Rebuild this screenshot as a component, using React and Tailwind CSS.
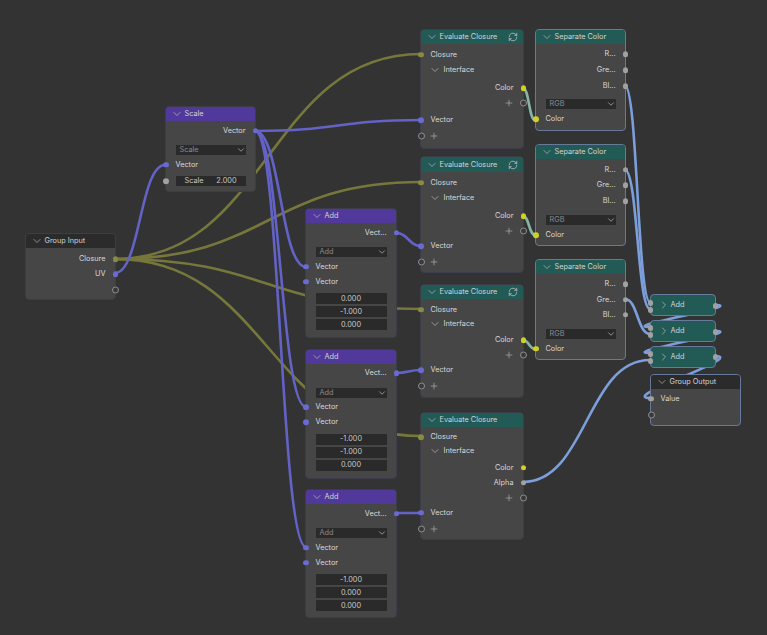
import React from "react";
import { RefreshCw, Plus, ChevronDown, ChevronRight } from "lucide-react";

const CLOSURE = "#77773c";
const VECTOR = "#6363c7";
const VALUE = "#7c9fdc";
const MINT = "#86b5a5";

// [x1, y1, x2, y2, colour], handles are half the horizontal distance like blender
const LINKS = [
  [115, 259, 421, 54, CLOSURE],
  [115, 259, 421, 182, CLOSURE],
  [115, 259, 421, 309, CLOSURE],
  [115, 259, 421, 436, CLOSURE],
  [115, 273, 165, 165, VECTOR],
  [255, 131, 421, 120, VECTOR],
  [255, 131, 306, 267, VECTOR],
  [255, 131, 306, 407, VECTOR],
  [255, 131, 306, 547, VECTOR],
  [396, 233, 421, 246, VECTOR],
  [396, 373, 421, 370, VECTOR],
  [396, 513, 421, 513, VECTOR],
  [523, 88, 535, 120, MINT],
  [523, 216, 535, 235, MINT],
  [523, 340, 535, 349, MINT],
  [625, 86, 650, 302, VALUE],
  [625, 170, 650, 309, VALUE],
  [625, 299, 650, 334, VALUE],
  [715, 305, 650, 327, VALUE],
  [715, 331, 650, 353, VALUE],
  [715, 356, 650, 398, VALUE],
  [523, 482, 650, 360, VALUE],
];

function linkPath([x1, y1, x2, y2]) {
  const h = Math.abs(x2 - x1) * 0.5;
  return `M${x1} ${y1} C${x1 + h} ${y1} ${x2 - h} ${y2} ${x2} ${y2}`;
}

const Socket = ({ side, type }) => {
  const place = side === "left" ? "-left-[3px]" : "-right-[3px]";
  if (type === "virtual") {
    const ringPlace = side === "left" ? "-left-[3.5px]" : "-right-[3.5px]";
    return <span className={`absolute top-1/2 -translate-y-1/2 ${ringPlace} h-[7px] w-[7px] rounded-full border border-[#8f8f8f] bg-[#3a3a3a]`} />;
  }
  const colour = {
    vector: "bg-[#6a6ad0]",
    closure: "bg-[#8a8a45]",
    color: "bg-[#d0d028]",
    value: "bg-[#a1a1a1]",
  }[type];
  return <span className={`absolute top-1/2 -translate-y-1/2 ${place} h-[5.5px] w-[5.5px] rounded-full ${colour}`} />;
};

const Row = ({ children, side, type, right, className = "" }) => (
  <div className={`relative flex h-[15px] shrink-0 items-center px-[9.5px] ${right ? "justify-end" : ""} ${className}`}>
    {children}
    {type && <Socket side={side} type={type} />}
  </div>
);

const Node = ({ x, y, w, h, head, title, selected, sync, children }) => (
  <div
    className={`absolute flex flex-col rounded-[4px] border bg-[#464646] ${selected ? "border-[#66799a]" : "border-[#3c3c4a]"}`}
    style={{ left: x, top: y, width: w, height: h }}
  >
    <div className={`flex shrink-0 items-center rounded-t-[3px] pl-[5px] pr-[5px] ${head}`}>
      <ChevronDown size={12} strokeWidth={1.2} className="text-[#d0d0d0]" />
      <span className="ml-[1.5px] flex-1 text-[#d4d4d4]">{title}</span>
      {sync && <RefreshCw size={10} strokeWidth={1.5} className="text-[#d8d8d8]" />}
    </div>
    {children}
  </div>
);

const Dropdown = ({ label, className = "" }) => (
  <div className={`mx-[9.5px] flex h-[10px] shrink-0 items-center justify-between bg-[#2a2a2a] pl-[4px] text-[#8c8c8c] ${className}`}>
    <span>{label}</span>
    <ChevronDown size={10} strokeWidth={1.5} className="text-[#cfcfcf]" />
  </div>
);

const Field = ({ value }) => (
  <div className="flex h-[11px] items-center justify-center bg-[#2a2a2a] text-[#c8c8c8]">{value}</div>
);

const PlusRow = ({ left, className = "" }) => (
  <Row side={left ? "left" : "right"} type="virtual" right={!left} className={className}>
    <Plus size={10} strokeWidth={1.5} className={`text-[#b8b8b8] ${left ? "-ml-[2px]" : ""}`} />
  </Row>
);

const AddNode = ({ y, h, a, b, c }) => (
  <Node x={305} y={y} w={92} h={h} title="Add" head="h-[14px] bg-[#51399b]">
    <Row side="right" type="vector" right className="mt-[2px]">Vect...</Row>
    <Dropdown label="Add" className="mt-[7px]" />
    <Row side="left" type="vector" className="mt-[2px]">Vector</Row>
    <Row side="left" type="vector">Vector</Row>
    <div className="mx-[9.5px] mt-[4px] flex flex-col gap-[2px]">
      <Field value={a} />
      <Field value={b} />
      <Field value={c} />
    </div>
  </Node>
);

const EvalNode = ({ y, h, head, sync, alpha, closureGap, interfaceGap, colorGap, vecGap }) => (
  <Node x={420} y={y} w={104} h={h} title="Evaluate Closure" head={`${head} bg-[#225a56]`} sync={sync}>
    <Row side="left" type="closure" className={closureGap}>Closure</Row>
    <Row className={`!pl-[8px] ${interfaceGap}`}>
      <ChevronDown size={12} strokeWidth={1.2} className="text-[#d0d0d0]" />
      <span className="ml-[2.5px]">Interface</span>
    </Row>
    <Row side="right" type="color" right className={colorGap}>Color</Row>
    {alpha && <Row side="right" type="value" right>Alpha</Row>}
    <PlusRow />
    <Row side="left" type="vector" className={vecGap}>Vector</Row>
    <PlusRow left className="mt-[1px]" />
  </Node>
);

const SeparateNode = ({ y, h, rGap, greGap, blGap, selectGap }) => (
  <Node x={535} y={y} w={91} h={h} selected title="Separate Color" head="h-[14px] bg-[#225a56]">
    <Row side="right" type="value" right className={rGap}>R...</Row>
    <Row side="right" type="value" right className={greGap}>Gre...</Row>
    <Row side="right" type="value" right className={blGap}>Bl...</Row>
    <Dropdown label="RGB" className={selectGap} />
    <Row side="left" type="color" className="mt-[2.5px]">Color</Row>
  </Node>
);

const SmallAdd = ({ y, first, second, out }) => (
  <div className="absolute flex h-[22px] w-[66px] items-center rounded-[4px] border border-[#66799a] bg-[#225a56] pl-[7px] text-[#d4d4d4]" style={{ left: 650, top: y }}>
    <ChevronRight size={12} strokeWidth={1.2} />
    <span className="ml-[0.5px]">Add</span>
    {[first, second].map((t) => (
      <span key={t} className="absolute -left-[3.5px] h-[5.5px] w-[5.5px] rounded-full bg-[#a1a1a1]" style={{ top: t }} />
    ))}
    <span className="absolute -right-[3px] h-[5.5px] w-[5.5px] rounded-full bg-[#a1a1a1]" style={{ top: out }} />
  </div>
);

export default function App() {
  return (
    <div className="relative h-[635px] w-[767px] overflow-hidden bg-[#333333] text-[7.3px] leading-none text-[#d8d8d8] [font-family:Inter,sans-serif]">
      <svg className="absolute inset-0" width="767" height="635" fill="none">
        {LINKS.map((l, i) => (
          <path key={i} d={linkPath(l)} stroke={l[4]} strokeWidth="2.6" strokeLinecap="round" />
        ))}
      </svg>

      <Node x={25} y={233} w={91} h={67} title="Group Input" head="h-[14px] bg-[#2b2b2b]">
        <Row side="right" type="closure" right className="mt-[3.5px]">Closure</Row>
        <Row side="right" type="vector" right>UV</Row>
        <Row side="right" type="virtual" right className="mt-[1px]" />
      </Node>

      <Node x={165} y={106} w={91} h={86} title="Scale" head="h-[14px] bg-[#51399b]">
        <Row side="right" type="vector" right className="mt-[2px]">Vector</Row>
        <Dropdown label="Scale" className="mt-[7px]" />
        <Row side="left" type="vector" className="mt-[2px]">Vector</Row>
        <Row side="left" type="value" className="mt-[1.5px]">
          <div className="flex h-[10px] w-full items-center justify-between bg-[#2a2a2a] px-[9px] text-[#c8c8c8]">
            <span>Scale</span>
            <span>2.000</span>
          </div>
        </Row>
      </Node>

      <AddNode y={208} h={130} a="0.000" b="-1.000" c="0.000" />
      <AddNode y={348.5} h={130} a="-1.000" b="-1.000" c="0.000" />
      <AddNode y={489} h={129} a="-1.000" b="0.000" c="0.000" />

      <EvalNode y={29} h={120} head="h-[14px]" sync closureGap="mt-[3px]" interfaceGap="" colorGap="mt-[3.5px]" vecGap="mt-[2px]" />
      <EvalNode y={156} h={117} head="h-[15px]" sync closureGap="mt-[3px]" interfaceGap="" colorGap="mt-[3.5px]" vecGap="" />
      <EvalNode y={284} h={114} head="h-[14px]" sync closureGap="mt-[3px]" interfaceGap="-mt-[1px]" colorGap="mt-[1.5px]" vecGap="" />
      <EvalNode y={412} h={128} head="h-[14px]" alpha closureGap="mt-[2.5px]" interfaceGap="-mt-[1px]" colorGap="mt-[1.5px]" vecGap="" />

      <SeparateNode y={29} h={102} rGap="mt-[2.5px]" greGap="mt-[1px]" blGap="mt-[1px]" selectGap="mt-[5.5px]" />
      <SeparateNode y={144} h={102} rGap="mt-[3px]" greGap="mt-[0.5px]" blGap="mt-[1px]" selectGap="mt-[6.5px]" />
      <SeparateNode y={259} h={101} rGap="mt-[2.5px]" greGap="mt-[0.5px]" blGap="" selectGap="mt-[6.5px]" />

      <SmallAdd y={294} first={5} second={12} out={8} />
      <SmallAdd y={320} first={4} second={11} out={8} />
      <SmallAdd y={346} first={4} second={11} out={7} />

      <Node x={650} y={374} w={91} h={52} selected title="Group Output" head="h-[14px] bg-[#2b2b2b]">
        <Row side="left" type="value" className="mt-[2px]">Value</Row>
        <Row side="left" type="virtual" className="mt-[1px]" />
      </Node>
    </div>
  );
}
